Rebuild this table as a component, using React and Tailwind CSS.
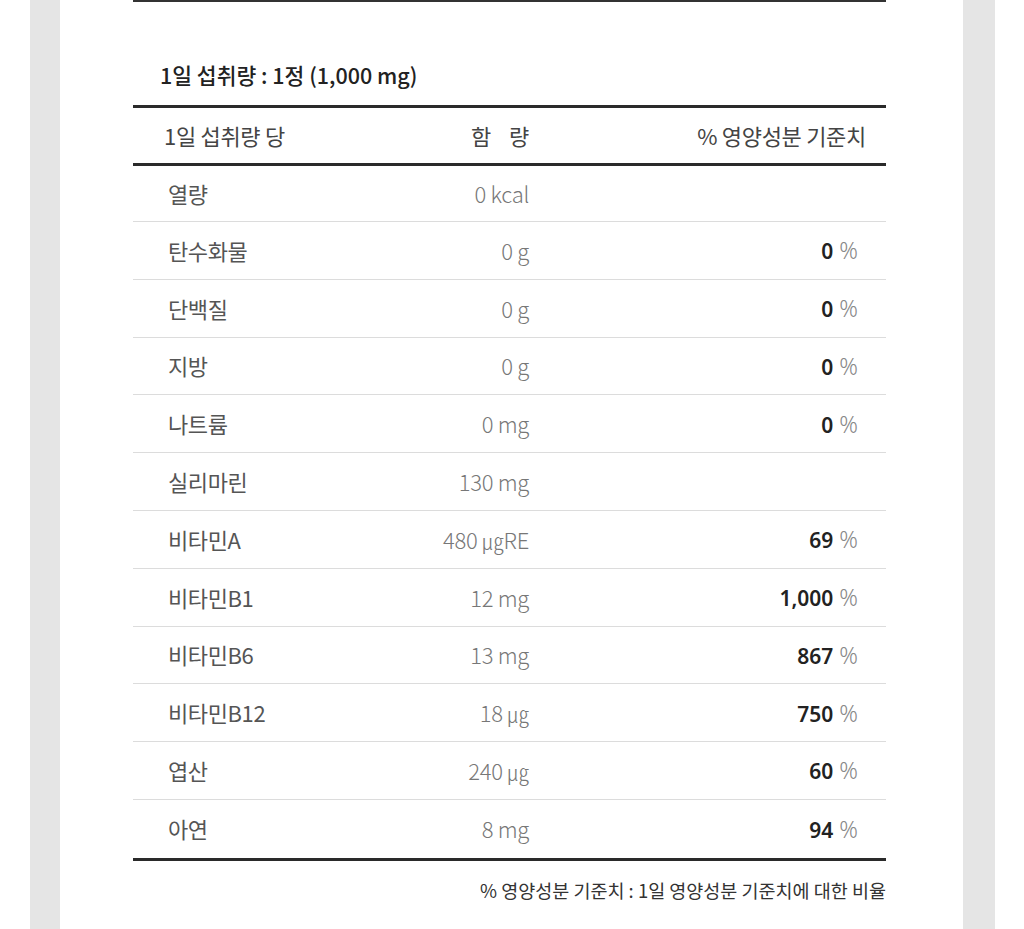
const rows = [
  { name: "열량", amount: "0 kcal", pct: null },
  { name: "탄수화물", amount: "0 g", pct: "0" },
  { name: "단백질", amount: "0 g", pct: "0" },
  { name: "지방", amount: "0 g", pct: "0" },
  { name: "나트륨", amount: "0 mg", pct: "0" },
  { name: "실리마린", amount: "130 mg", pct: null },
  { name: "비타민A", amount: "480 ㎍RE", pct: "69" },
  { name: "비타민B1", amount: "12 mg", pct: "1,000" },
  { name: "비타민B6", amount: "13 mg", pct: "867" },
  { name: "비타민B12", amount: "18 ㎍", pct: "750" },
  { name: "엽산", amount: "240 ㎍", pct: "60" },
  { name: "아연", amount: "8 mg", pct: "94" },
];

const kr = { fontFamily: '"Noto Sans CJK KR", "Noto Sans", sans-serif' };
const num = { fontFamily: '"Noto Sans", "Noto Sans CJK KR", sans-serif' };

export default function App() {
  return (
    <div className="flex w-[1024px] h-[929px] bg-white overflow-hidden" style={kr}>
      <div className="w-[30px] shrink-0 bg-white" />
      <div className="w-[30px] shrink-0 bg-[#e5e5e5]" />

      <div className="w-[903px] shrink-0 bg-white pl-[73px]">
        <div className="w-[753px]">
          <div className="h-[2px] bg-[#333]" />

          <div className="h-[103px] flex items-end pb-[16px] pl-[27px]">
            <div className="text-[21.5px] leading-[28px] font-medium text-[#222]">
              1일 섭취량 : 1정 (1,000 mg)
            </div>
          </div>

          <div className="h-[3px] bg-[#2a2a2a]" />

          <div className="h-[55px] flex items-center text-[22px] text-[#444] tracking-[-0.3px]">
            <div className="w-[236px] pl-[31px]">1일 섭취량 당</div>
            <div className="w-[160px] text-right">
              함<span className="inline-block w-[18px]" />량
            </div>
            <div className="flex-1 text-right pr-[20px]">% 영양성분 기준치</div>
          </div>

          <div className="h-[3px] bg-[#2a2a2a]" />

          {rows.map((r, i) => (
            <div
              key={r.name}
              className={`flex items-center ${i === 0 ? "h-[56px]" : "h-[57.8px]"} ${
                i < rows.length - 1 ? "border-b border-[#dcdcdc]" : ""
              }`}
            >
              <div className="w-[236px] pl-[35px] text-[22px] tracking-[-0.4px] text-[#555]">{r.name}</div>
              <div className="w-[160px] text-right text-[22px] font-light text-[#777] tracking-[-0.3px]">
                {r.amount}
              </div>
              <div className="flex-1 text-right pr-[28px]">
                {r.pct && (
                  <>
                    <span className="font-semibold text-[#222] text-[21px]" style={num}>
                      {r.pct}
                    </span>
                    <span className="font-light text-[#888] text-[23px]" style={num}>
                      {" "}%
                    </span>
                  </>
                )}
              </div>
            </div>
          ))}

          <div className="h-[3px] bg-[#2a2a2a]" />

          <div className="pt-[15px] text-right">
            <span className="text-[18.5px] leading-[28px] text-[#333]">
              % 영양성분 기준치 : 1일 영양성분 기준치에 대한 비율
            </span>
          </div>
        </div>
      </div>

      <div className="w-[32px] shrink-0 bg-[#e5e5e5]" />
      <div className="flex-1 bg-white" />
    </div>
  );
}
